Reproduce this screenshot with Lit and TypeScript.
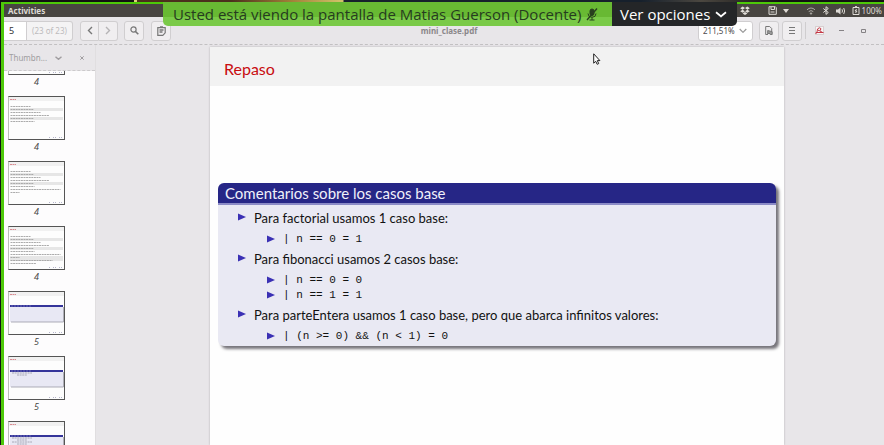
import { LitElement, html, css, svg, nothing } from "lit";
import { customElement, property } from "lit/decorators.js";
import { classMap } from "lit/directives/class-map.js";

type Item = { text: string; code: string[] };
type Thumb = { label: string; kind: "text" | "block"; lines: number; cut?: boolean };

const items: Item[] = [
  { text: "Para factorial usamos 1 caso base:", code: ["| n == 0 = 1"] },
  { text: "Para fibonacci usamos 2 casos base:", code: ["| n == 0 = 0", "| n == 1 = 1"] },
  {
    text: "Para parteEntera usamos 1 caso base, pero que abarca infinitos valores:",
    code: ["| (n >= 0) && (n < 1) = 0"],
  },
];

const thumbs: Thumb[] = [
  { label: "4", kind: "text", lines: 0, cut: true },
  { label: "4", kind: "text", lines: 6 },
  { label: "4", kind: "text", lines: 8 },
  { label: "4", kind: "text", lines: 10 },
  { label: "5", kind: "block", lines: 0 },
  { label: "5", kind: "block", lines: 2 },
  { label: "", kind: "block", lines: 4 },
];

const textWidths = [20, 23, 30, 39, 23, 24, 50, 9, 42, 26];

@customElement("slide-thumb")
class SlideThumb extends LitElement {
  @property({ attribute: false }) thumb!: Thumb;

  static styles = css`
    :host {
      display: block;
    }
    .item {
      display: flex;
      flex-direction: column;
      align-items: center;
      width: 59px;
      height: 65px;
      padding: 0;
      border: 0;
      background: none;
      color: #444;
      font: italic 9px/14px "Noto Sans", sans-serif;
    }
    .frame {
      box-sizing: border-box;
      display: flex;
      flex: none;
      align-items: flex-end;
      width: 57px;
      height: 44px;
      border: 1px solid #555;
      border-left-color: #bbb;
      background: #fdfdfd;
      overflow: hidden;
    }
    .cut {
      height: 25px;
    }
    .cut .frame {
      height: 4px;
      border-top: 0;
    }
  `;

  render() {
    const t = this.thumb;
    return html`<button class=${classMap({ item: true, cut: !!t.cut })} aria-label="Slide">
      <span class="frame">
        <svg width="55" height="42" viewBox="0 0 55 42" aria-hidden="true">
          <rect width="55" height="4" fill="#f1f1f1" />
          <path d="M1 2.5h6" stroke="#d98a90" stroke-dasharray="2 .5" />
          ${t.kind === "block"
            ? svg`<rect x="1" y="14" width="53" height="16" fill="#e8e8f4" />
                <rect x="1" y="13" width="53" height="2" fill="#35359a" />
                <path d="M2 14h20" stroke="#8c8cc8" stroke-width=".6" stroke-dasharray="2 1" />
                <path d="M2 30h52.5V15" fill="none" stroke="#9a9aa6" stroke-width=".8" />`
            : svg`<rect x="1" y="11" width="53" height="3" fill="#e6e6e6" />
                <rect x="1" y="20" width="53" height="3" fill="#e6e6e6" />
                ${t.lines > 8 ? svg`<rect x="1" y="29" width="53" height="5" fill="#e6e6e6" />` : nothing}`}
          ${Array.from({ length: t.lines }, (_, i) =>
            t.kind === "block"
              ? svg`<path d=${`M${3 + (i % 2) * 5} ${16 + i * 2}h${i % 2 ? 10 : 20}`} stroke="#9a9aa8" stroke-width=".8" stroke-dasharray="2 .6" />`
              : svg`<path d=${`M1.5 ${9.5 + i * 3}h${textWidths[i]}`} stroke="#a2a2a2" stroke-width=".9" stroke-dasharray="2 .6" />`
          )}
          <path d="M40 40.5h14" stroke="#b5b5cc" stroke-dasharray="1 3 1 1" />
        </svg>
      </span>
      ${t.label ? html`<span>${t.label}</span>` : nothing}
    </button>`;
  }
}

@customElement("app-root")
class AppRoot extends LitElement {
  static styles = css`
    :host {
      display: block;
      position: relative;
      font-family: "Noto Sans", sans-serif;
      color: #4c4a4c;
    }
    * {
      box-sizing: border-box;
    }
    button,
    input,
    select {
      margin: 0;
      padding: 0;
      color: inherit;
      font: inherit;
    }
    svg {
      display: block;
      flex: none;
    }
    .screen {
      display: flex;
      flex-direction: column;
      height: 100vh;
      overflow: hidden;
      border-left: 1px solid #101010;
    }
    .strip {
      flex: none;
      height: 2px;
      background: linear-gradient(90deg, #111 0 133px, #d8cf77 133px 136px, #4b2f1c 136px 230px, #a08038 290px, #d2c46a 342px, #16202c 343px 640px, #4b4740 700px, #111 780px);
    }
    .shared {
      display: flex;
      flex: 1;
      flex-direction: column;
      min-height: 0;
      border: solid #4dc808;
      border-width: 2px 0 0 3px;
      background: #e8e6e9;
    }
    .topbar {
      display: flex;
      flex: none;
      align-items: center;
      justify-content: space-between;
      height: 13px;
      padding: 0 2px 0 4px;
      background: #484541;
      color: #dfdcd6;
      font-size: 8px;
      line-height: 12px;
    }
    .activities {
      border: 0;
      background: none;
      font-weight: 700;
    }
    .tray {
      display: flex;
      align-items: center;
    }
    .tray svg {
      margin-right: 6px;
    }
    .tray .disk {
      margin: 0 6px 0 12px;
    }
    .tray .arrow {
      margin-right: 17px;
    }
    .tray .battery {
      margin-right: 2px;
    }
    .toolbar {
      display: grid;
      flex: none;
      grid-template-columns: 1fr auto 1fr;
      align-items: center;
      height: 28px;
      border-bottom: 1px dashed #c2c0c2;
      font-size: 9px;
    }
    .group {
      display: flex;
      align-items: center;
    }
    .right {
      justify-content: flex-end;
    }
    .pager {
      display: flex;
      align-items: center;
      width: 69px;
      height: 20px;
      margin-right: 7px;
      border: 1px solid #d0ced0;
      border-left: 0;
      border-radius: 0 3px 3px 0;
      background: #f4f3f4;
      color: #bdbbbd;
      font-size: 8px;
      white-space: nowrap;
    }
    .pager input {
      flex: none;
      width: 23px;
      height: 18px;
      margin-right: 5px;
      padding-left: 5px;
      border: 0;
      border-right: 1px solid #d0ced0;
      background: #fff;
      color: #333;
      font-size: 9px;
    }
    .tool {
      display: flex;
      align-items: center;
      justify-content: center;
      width: 20px;
      height: 20px;
      border: 1px solid #d0ced0;
      border-radius: 3px;
      background: #f0eef0;
      color: #777;
    }
    .prev {
      width: 19px;
      border-radius: 3px 0 0 3px;
    }
    .next {
      width: 19px;
      margin-right: 6px;
      border-left: 0;
      border-radius: 0 3px 3px 0;
      color: #b5b3b5;
    }
    .find {
      margin-right: 7px;
    }
    .title {
      margin: 0;
      padding-left: 10px;
      color: #8b888b;
      font-size: 8px;
      font-weight: 700;
    }
    .zoom {
      display: grid;
      align-items: center;
      width: 55px;
      height: 20px;
      margin-right: 6px;
    }
    .zoom > * {
      grid-area: 1 / 1;
    }
    .zoom select {
      width: 55px;
      height: 20px;
      padding-left: 4px;
      appearance: none;
      border: 1px solid #d0ced0;
      border-radius: 3px;
      background: #fff;
      font-size: 8px;
    }
    .zoom svg {
      justify-self: end;
      margin-right: 6px;
      pointer-events: none;
      color: #999;
    }
    .menu {
      margin-left: 3px;
    }
    .app {
      display: flex;
      margin-left: 3px;
      padding: 4px 6px 4px 9px;
      border-left: 1px solid #cfcdcf;
    }
    .win {
      display: grid;
      place-items: center;
      width: 22px;
      height: 20px;
      border: 0;
      background: none;
      color: #858285;
    }
    .win:last-child {
      margin-right: 10px;
    }
    .work {
      display: flex;
      flex: 1;
      min-height: 0;
    }
    .side {
      display: flex;
      flex: none;
      flex-direction: column;
      width: 92px;
      border-right: 1px solid #e0dee0;
      background: #fdfcfd;
    }
    .side-head {
      display: flex;
      flex: none;
      align-items: center;
      height: 26px;
      padding: 0 8px 0 5px;
      border-bottom: 1px dashed #cccacc;
      background: #e8e6e9;
      color: #a09da0;
      font-size: 8px;
    }
    .side-head button {
      display: grid;
      place-items: center;
      height: 16px;
      border: 0;
      background: none;
    }
    .side-head .picker {
      display: flex;
      flex: 1;
      align-items: center;
      gap: 8px;
    }
    .close {
      width: 10px;
    }
    .thumbs {
      flex: 1;
      min-height: 0;
      padding-left: 3px;
      overflow: hidden;
    }
    .doc {
      flex: 1;
      min-width: 0;
      padding: 2px 100px 0 114px;
      overflow: hidden;
    }
    .page {
      height: 100%;
      background: #fefefe;
      box-shadow: 0 0 2px #b0aeb0;
    }
    .page h1 {
      height: 39px;
      margin: 0 0 97px;
      padding-left: 14px;
      background: #f2f2f2;
      color: #c80c10;
      font: 400 16px/43px Lato, sans-serif;
    }
    .block {
      margin: 0 8px;
      border-radius: 6px;
      background: #e9e9f3;
      box-shadow: 3px 3px 3px #77757b;
      color: #111;
    }
    .block h2 {
      height: 22px;
      margin: 0;
      padding-left: 7px;
      border-bottom: 2px solid #8b8bc6;
      border-radius: 6px 6px 0 0;
      background: #262686;
      color: #f0f0fa;
      font: 400 15px/20px Lato, sans-serif;
    }
    .block ul {
      margin: 0;
      padding: 0;
      list-style: none;
    }
    .block .outer {
      padding: 3px 0 0 20px;
      font: 13px/20px Lato, sans-serif;
    }
    .block .inner {
      padding: 4px 0 2px 29px;
      font: 11px/15px "Liberation Mono", monospace;
    }
    .block code {
      font: inherit;
    }
    .row {
      display: flex;
      align-items: center;
      gap: 8px;
      white-space: pre;
    }
    .row svg {
      margin-bottom: 2px;
    }
    .banner {
      position: absolute;
      top: 2px;
      left: 163px;
      display: flex;
      height: 24px;
      font-family: "Open Sans", sans-serif;
      font-size: 15px;
      line-height: 24px;
      white-space: nowrap;
    }
    .notice {
      display: flex;
      align-items: center;
      gap: 5px;
      width: 449px;
      padding-left: 10px;
      border-radius: 0 0 0 5px;
      background: linear-gradient(#68b933 0 15px, #7aca48 15px);
      color: #263c20;
    }
    .options {
      display: flex;
      align-items: center;
      gap: 5px;
      width: 125px;
      padding-left: 8px;
      border: 0;
      border-radius: 0 0 5px 0;
      background: #242628;
      color: #fff;
      font-weight: 500;
    }
    .pointer {
      position: absolute;
      top: 53px;
      left: 593px;
    }
  `;

  private chevron(d: string, w: number, h: number, sw = 1.4) {
    return html`<svg width=${w} height=${h} viewBox="0 0 ${w} ${h}" fill="none" stroke="currentColor" stroke-width=${sw} aria-hidden="true"><path d=${d} /></svg>`;
  }

  private bullet() {
    return html`<svg width="8" height="8" viewBox="0 0 8 8" aria-hidden="true"><path d="M0 0.5L8 4L0 7.5z" fill="#3a30b4" /></svg>`;
  }

  private topbar() {
    return html`<div class="topbar">
      <button class="activities">Activities</button>
      <div class="tray">
        <svg width="10" height="10" viewBox="0 0 10 10" fill="#e2dfda"><path d="M2.7.6L5 2.1 2.6 3.7.2 2.2zM7.3.6L5 2.1l2.4 1.6 2.4-1.5zM.2 5.2l2.4-1.5L5 5.2 2.7 6.8zM9.8 5.2L7.4 3.7 5 5.2l2.3 1.6zM2.6 7.4L5 5.9l2.4 1.5L5 9z" /></svg>
        <svg class="disk" width="9" height="9" viewBox="0 0 9 9" fill="none" stroke="#dedbd6"><path d="M1 .7h6.3l1 1v6.6H1zM3 1v2.5h3.5V1M2.5 6h4" /></svg>
        <svg class="arrow" width="6" height="4" viewBox="0 0 6 4"><path d="M0 0h6L3 4z" fill="#dedbd6" /></svg>
        <svg width="10" height="8" viewBox="0 0 10 8" fill="none" stroke="#aaa7a2"><path d="M1 2.8Q5-.8 9 2.8M2.7 4.6Q5 2.6 7.3 4.6" /><circle cx="5" cy="6.5" r=".7" fill="#ccc" /></svg>
        <svg width="8" height="9" viewBox="0 0 8 9" fill="none" stroke="#dedbd6"><path d="M1.3 2.5l5 4L4 8.4V.7l2.3 1.8-5 4" /></svg>
        <svg width="10" height="8" viewBox="0 0 10 8"><path d="M0 2.6h2L4.5.5v7L2 5.4H0z" fill="#dedbd6" /><path d="M6 2.3Q7 4 6 5.7M7.7 1Q9.6 4 7.7 7" fill="none" stroke="#dedbd6" /></svg>
        <svg class="battery" width="8" height="9" viewBox="0 0 8 9" fill="none" stroke="#dedbd6"><path d="M1 1.5h6v7H1zM3 .6h2M4.6 3L3 5h2L3.5 7" /></svg>
        <span>100%</span>
      </div>
    </div>`;
  }

  private toolbar() {
    return html`<div class="toolbar">
      <div class="group">
        <label class="pager"><input type="text" value="5" aria-label="Page" />(23 of 23)</label>
        <button class="tool prev" aria-label="Previous page">${this.chevron("M5 1L1.5 4.5L5 8", 6, 9)}</button>
        <button class="tool next" aria-label="Next page">${this.chevron("M1 1L4.5 4.5L1 8", 6, 9)}</button>
        <button class="tool find" aria-label="Find">
          <svg width="9" height="9" viewBox="0 0 9 9" fill="none" stroke="currentColor" stroke-width="1.2"><circle cx="3.5" cy="3.5" r="2.6" /><path d="M5.5 5.5L8.3 8.3" stroke-width="1.6" /></svg>
        </button>
        <button class="tool" aria-label="Annotate">
          <svg width="9" height="10" viewBox="0 0 9 10" fill="none" stroke="currentColor" stroke-width="1.2"><path d="M.8 1.6h7.4v5.2L5.8 9.3h-5z" /><path d="M3 1h3M2.5 4h4M2.5 6h3" stroke-width="1.6" /></svg>
        </button>
      </div>
      <h1 class="title">mini_clase.pdf</h1>
      <div class="group right">
        <div class="zoom">
          <select aria-label="Zoom"><option>211,51%</option></select>
          ${this.chevron("M.7 1L4 4.3L7.3 1", 8, 5, 1.2)}
        </div>
        <button class="tool" aria-label="Document">
          <svg width="8" height="9" viewBox="0 0 8 9" fill="none" stroke="currentColor"><path d="M3 8.5H.7v-8h4l2 2v3" /><path d="M2.7 4.5v3.5l1.5-1 1 1.5h2V5.7z" fill="#999" /></svg>
        </button>
        <button class="tool menu" aria-label="Menu">
          <svg width="6" height="7" viewBox="0 0 6 7" stroke="currentColor"><path d="M0 .5h6M0 3.5h6M0 6.5h6" /></svg>
        </button>
        <span class="app">
          <svg width="9" height="9" viewBox="0 0 9 9" fill="none"><path d="M.5.5h8v8h-8z" fill="#f8f5f5" stroke="#c8b8ba" stroke-width=".6" /><path d="M1 8V6.5h7.5M2 6Q2 2 4.3 1.8 6.8 2 5.5 4.2 4 5.5 3 4M5 5l2.7 1.5" stroke="#c43846" /></svg>
        </span>
        <button class="win" aria-label="Minimize"><svg width="5" height="1"><path d="M0 .5h5" stroke="currentColor" /></svg></button>
        <button class="win" aria-label="Restore"><svg width="5" height="4"><path d="M.5.5h4v3h-4z" fill="none" stroke="currentColor" /></svg></button>
      </div>
    </div>`;
  }

  render() {
    return html`
      <div class="screen">
        <div class="strip"></div>
        <div class="shared">
          ${this.topbar()} ${this.toolbar()}
          <div class="work">
            <aside class="side">
              <div class="side-head">
                <button class="picker">Thumbn... ${this.chevron("M.5 .7L3.5 3.3L6.5 .7", 7, 4, 1.4)}</button>
                <button class="close" aria-label="Close sidebar">
                  <svg width="4" height="4" viewBox="0 0 4 4" stroke="currentColor"><path d="M.3.3l3.4 3.4M3.7.3L.3 3.7" /></svg>
                </button>
              </div>
              <nav class="thumbs" aria-label="Thumbnails">
                ${thumbs.map((t) => html`<slide-thumb .thumb=${t}></slide-thumb>`)}
              </nav>
            </aside>
            <main class="doc">
              <article class="page">
                <h1>Repaso</h1>
                <section class="block">
                  <h2>Comentarios sobre los casos base</h2>
                  <ul class="outer">
                    ${items.map(
                      (item) => html`<li>
                        <div class="row">${this.bullet()}<span>${item.text}</span></div>
                        <ul class="inner">
                          ${item.code.map((c) => html`<li class="row">${this.bullet()}<code>${c}</code></li>`)}
                        </ul>
                      </li>`
                    )}
                  </ul>
                </section>
              </article>
            </main>
          </div>
        </div>
      </div>
      <div class="banner">
        <div class="notice">
          <span>Usted está viendo la pantalla de Matias Guerson (Docente)</span>
          <svg width="12" height="13" viewBox="0 0 12 13" fill="none" stroke="#29401f"><rect x="4" y="1" width="4" height="6.5" rx="2" fill="#29401f" /><path d="M2 5.5Q2 9.3 6 9.3T10 5.5M6 9.3V12M3.5 12h5" /><path d="M11 .5L1 12" stroke-width="1.4" /></svg>
        </div>
        <button class="options">Ver opciones ${this.chevron("M1 1.2Q3.5 3 6 5.4Q8.5 3 11 1.2", 12, 7, 1.8)}</button>
      </div>
      <svg class="pointer" width="8" height="12" viewBox="0 0 8 12" aria-hidden="true"><path d="M.7.8v9.400l2-1.900 1.500 3 1.500-.7-1.400-3h2.600z" fill="#fff" stroke="#222" /></svg>
    `;
  }
}
